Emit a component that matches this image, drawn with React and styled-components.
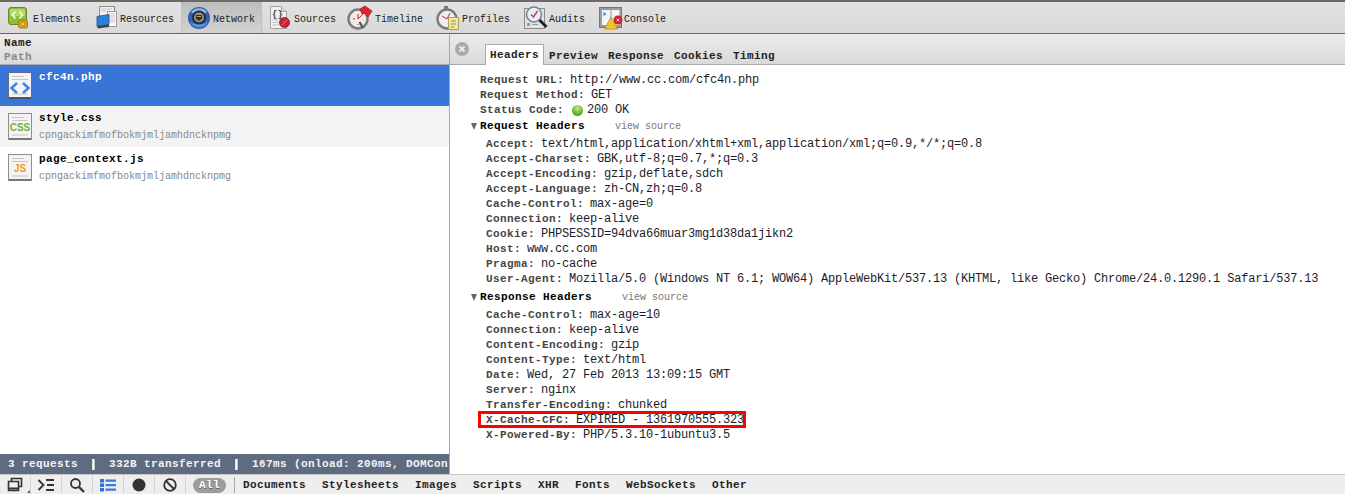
import React from 'react';
import styled, { createGlobalStyle, css } from 'styled-components';

const GlobalStyle = createGlobalStyle`
    html, body { margin: 0; padding: 0; background: #fff; }
    body { font-family: "Liberation Mono", "DejaVu Sans Mono", monospace; font-size: 10px; color: #222; }
`;

const boldText = css`
    font-family: "Liberation Mono", monospace;
    font-weight: 700;
    font-size: 11px;
    letter-spacing: 0.4px;
`;

const Page = styled.div`
    width: 1345px;
    height: 494px;
    overflow: hidden;
    display: flex;
    flex-direction: column;
`;

const Toolbar = styled.div`
    height: 31px;
    flex: none;
    display: flex;
    gap: 2px;
    padding-left: 2px;
    border-top: 2px solid #6a6a6a;
    border-bottom: 1px solid #666;
    background: linear-gradient(#e2e2e2, #d9d9d9);
`;

const ToolItem = styled.div`
    display: flex;
    align-items: center;
    padding: 0 6px;
    color: #222;
    font-size: 10px;
    ${(p) => p.$active && css`
        margin: 0 -1px;
        border-left: 1px solid #c0c0c0;
        border-right: 1px solid #c0c0c0;
        background: linear-gradient(#bdbdbd, #d2d2d2);
    `}
    svg { flex: none; width: 25px; height: 24px; overflow: visible; }
`;

const ToolLabel = styled.span`
    margin-top: 3px;
`;

const Main = styled.div`
    flex: 1;
    min-height: 0;
    display: flex;
`;

const LeftPane = styled.div`
    width: 449px;
    flex: none;
    display: flex;
    flex-direction: column;
    border-right: 1px solid #a9a9a9;
`;

const ListHeader = styled.div`
    height: 31px;
    flex: none;
    box-sizing: border-box;
    padding: 2px 0 0 4px;
    background: linear-gradient(#ececec, #d9d9d9);
    border-bottom: 1px solid #aaa;
    ${boldText}
    line-height: 14px;
`;

const HeaderSub = styled.div`
    color: #888;
`;

const FileList = styled.div`
    flex: 1;
    background: #fff;
`;

const FileRow = styled.div`
    height: 41px;
    box-sizing: border-box;
    display: flex;
    padding-left: 8px;
    background: ${(p) => (p.$selected ? '#3875d7' : p.$odd ? '#f3f3f3' : '#fff')};
    color: ${(p) => (p.$selected ? '#fff' : '#000')};
    svg { flex: none; width: 24px; height: 28px; margin-top: 7px; }
`;

const FileText = styled.div`
    margin-left: 7px;
    padding-top: 6px;
`;

const FileName = styled.div`
    ${boldText}
    line-height: 12px;
`;

const FilePath = styled.div`
    margin-top: 6px;
    line-height: 12px;
    font-size: 10px;
    color: #888;
`;

const StatusBar = styled.div`
    height: 20px;
    flex: none;
    display: flex;
    align-items: center;
    gap: 14px;
    padding-left: 8px;
    overflow: hidden;
    white-space: nowrap;
    background: #5f6b80;
    color: #f4f4f4;
    ${boldText}
`;

const StatusDivider = styled.span`
    flex: none;
    width: 3px;
    height: 11px;
    background: linear-gradient(90deg, #f5e0a0 0 33%, #fff 33% 66%, #a9c4ee 66%);
`;

const RightPane = styled.div`
    flex: 1;
    min-width: 0;
    background: #fff;
`;

const TabBar = styled.div`
    height: 31px;
    box-sizing: border-box;
    display: flex;
    align-items: flex-end;
    padding-left: 5px;
    background: linear-gradient(#ececec, #d9d9d9);
    border-bottom: 1px solid #aaa;
`;

const CloseButton = styled.div`
    align-self: flex-start;
    width: 14px;
    height: 14px;
    margin: 8px 16px 0 0;
    border-radius: 50%;
    background: #a9a9a9;
    color: #eee;
    svg { display: block; width: 14px; height: 14px; }
`;

const Tab = styled.div`
    height: 20px;
    box-sizing: border-box;
    padding: 0 5px;
    margin-bottom: -1px;
    line-height: 22px;
    color: #222;
    ${boldText}
    ${(p) => p.$active && css`
        height: 21px;
        background: #fff;
        border: 1px solid #aaa;
        border-bottom: 0;
        padding: 0 4px;
        line-height: 21px;
    `}
`;

const Details = styled.div`
    padding: 8px 0 0 30px;
    white-space: nowrap;
`;

const Row = styled.div`
    height: 15px;
    display: flex;
    align-items: center;
    line-height: 15px;
    ${(p) => p.$marked && css`
        position: relative;
        width: fit-content;
        margin-left: -8px;
        padding: 0 2px 0 8px;
        &::after {
            content: "";
            position: absolute;
            left: 0;
            right: 0;
            top: -2px;
            height: 17px;
            box-sizing: border-box;
            border: 3px solid #f00;
        }
    `}
`;

const Key = styled.span`
    ${boldText}
    color: #444;
    margin-right: 6px;
`;

const Value = styled.span`
    font-family: "Liberation Mono", monospace;
    font-size: 12px;
    letter-spacing: -0.2px;
    color: #1c1c2c;
`;

const StatusDot = styled.span`
    width: 11px;
    height: 11px;
    margin: 0 4px 0 2px;
    border-radius: 50%;
    background: radial-gradient(circle at 50% 30%, #c5ec8c, #5fb32a 60%, #3c8a17);
`;

const SectionHead = styled.div`
    height: 15px;
    margin: 1px 0 3px -9px;
    display: flex;
    align-items: center;
    line-height: 15px;
    color: #000;
    ${boldText}
`;

const Arrow = styled.span`
    width: 0;
    height: 0;
    margin-right: 3px;
    border-left: 3.5px solid transparent;
    border-right: 3.5px solid transparent;
    border-top: 7px solid #666;
`;

const ViewSource = styled.span`
    margin-left: 30px;
    font-family: "Liberation Mono", monospace;
    font-weight: 400;
    font-size: 10px;
    letter-spacing: 0;
    color: #777;
`;

const SectionBody = styled.div`
    padding-left: 6px;
    margin-bottom: 3px;
`;

const BottomBar = styled.div`
    height: 20px;
    flex: none;
    box-sizing: border-box;
    display: flex;
    align-items: center;
    border-top: 1px solid #c8c8c8;
    background: #eee;
`;

const IconButton = styled.div`
    width: 31px;
    height: 19px;
    box-sizing: border-box;
    flex: none;
    display: flex;
    align-items: center;
    justify-content: center;
    border-right: 1px solid #d4d4d4;
    svg { width: 18px; height: 18px; overflow: visible; }
`;

const AllPill = styled.div`
    width: 33px;
    height: 15px;
    margin: 1px 0 0 7px;
    flex: none;
    border-radius: 8px;
    background: #9c9c9c;
    color: #fff;
    text-align: center;
    line-height: 15px;
    ${boldText}
    text-shadow: 0 1px 0 #666;
`;

const FilterDivider = styled.div`
    width: 1px;
    height: 16px;
    margin: 0 8px 0 8px;
    flex: none;
    background: #aaa;
`;

const Filters = styled.div`
    display: flex;
    gap: 16px;
    color: #222;
    ${boldText}
`;

const IconGlyph = styled.text`
    font-family: "Liberation Mono", monospace;
    font-weight: 700;
    font-size: 9px;
    fill: #444;
`;

const ElementsIcon = () => (
    <svg viewBox="0 0 25 24">
        <rect x="0.5" y="1.5" width="18" height="17" rx="2.5" fill="#8fbf3a" stroke="#5f8a28" />
        <rect x="2" y="3" width="15" height="7" rx="1.5" fill="#b4d968" />
        <path d="M7.5 5.5 4.5 9l3 3.5M11.5 5.5l3 3.5-3 3.5" fill="none" stroke="#f4f8e8" strokeWidth="1.7" />
        <rect x="10.5" y="14" width="9" height="8" rx="2" fill="#d9a916" stroke="#a37a0c" />
        <circle cx="15" cy="18" r="2" fill="#f3d65a" stroke="#a37a0c" strokeWidth="0.8" />
    </svg>
);

const ResourcesIcon = () => (
    <svg viewBox="0 0 25 24">
        <rect x="4.5" y="0.5" width="15" height="19" fill="#f1f1f1" stroke="#8a8a8a" />
        <rect x="12.5" y="5.5" width="9" height="15" fill="#fafafa" stroke="#9a9a9a" />
        <path d="M6 3h11M6 5h5M14 8h6M14 10h6M14 12h6M14 14h6M14 16h6" stroke="#bdbdbd" strokeWidth="0.8" />
        <path d="M2 10.5l12-2v10l-12 2z" fill="#2e7fe0" stroke="#19528f" strokeWidth="0.8" />
        <path d="M2 20l12-1.5v2.5L3 22.5z" fill="#444" />
    </svg>
);

const NetworkIcon = () => (
    <svg viewBox="0 0 25 24">
        <circle cx="11" cy="12" r="11" fill="#2f60b0" />
        <path d="M3 6a10.500 10.500 0 0 1 16 0l-3 2H6z" fill="#9fb4d4" />
        <path d="M2 15a9.500 9.500 0 0 0 18 0l-3 2.500H5z" fill="#5a92d8" />
        <circle cx="11" cy="11.500" r="7" fill="#1e2c4e" />
        <circle cx="11" cy="11.500" r="5" fill="#9a9184" />
        <path d="M8 9h6v4h-1.500v1.500h-3V13H8z" fill="#2c2a26" />
        <path d="M9 10h4v1H9z" fill="#c7a24a" />
    </svg>
);

const SourcesIcon = () => (
    <svg viewBox="0 0 25 24">
        <path d="M1.500 0.500h11l5 5v17h-16z" fill="#f2f2f2" stroke="#a3a3a3" />
        <path d="M12.500 0.500v5h5" fill="#ddd" stroke="#a3a3a3" />
        <IconGlyph x="3" y="11">{'{}'}</IconGlyph>
        <path d="M3.500 14h6M3.500 16.500h6M3.500 19h7" stroke="#bbb" strokeWidth="0.9" />
        <circle cx="15.500" cy="16.500" r="5" fill="#d2232a" stroke="#8e1116" strokeWidth="0.8" />
        <path d="M13 19l5-5" stroke="#f0787a" strokeWidth="1" />
    </svg>
);

const TimelineIcon = () => (
    <svg viewBox="0 0 25 24">
        <circle cx="8" cy="13" r="9.500" fill="#f0ecec" stroke="#7c7c7c" strokeWidth="2.500" />
        <path d="M8 13l5-5M8 13V8M3 13h2M8 18v1" stroke="#c2272d" strokeWidth="1" />
        <path d="M13 22l-3.500-6" stroke="#555" strokeWidth="2.200" />
        <path d="M10 3l5-3 7 5-4 6-3-4-3 1z" fill="#e0252a" stroke="#a31318" strokeWidth="0.7" />
    </svg>
);

const ProfilesIcon = () => (
    <svg viewBox="0 0 25 24">
        <rect x="7" y="0" width="4" height="3" fill="#777" />
        <circle cx="10" cy="13" r="9.500" fill="#efefef" stroke="#7a7a7a" strokeWidth="2.400" />
        <path d="M10 13l3-6M5 10l5 3" stroke="#c2272d" strokeWidth="1" />
        <rect x="11.500" y="11.500" width="10" height="12" fill="#f0e6a2" stroke="#b0a25c" />
        <path d="M14 15h5M14 18h5M14 21h3" stroke="#8c9a58" strokeWidth="1" />
    </svg>
);

const AuditsIcon = () => (
    <svg viewBox="0 0 25 24">
        <rect x="0.500" y="2.500" width="20" height="20" fill="#e2e2e2" stroke="#8a8a8a" />
        <rect x="3" y="17" width="3" height="3" fill="#9a9a9a" />
        <path d="M8 18.500h6" stroke="#9a9a9a" />
        <circle cx="10" cy="8.500" r="7.500" fill="#e4f0f6" stroke="#6f8795" strokeWidth="1.500" />
        <path d="M7 8.500l2.500 2.500 4-6" fill="none" stroke="#d5343a" strokeWidth="1.400" />
        <path d="M15.500 14l7 7" stroke="#222" strokeWidth="3" />
    </svg>
);

const ConsoleIcon = () => (
    <svg viewBox="0 0 25 24">
        <rect x="0.500" y="1.500" width="22" height="20" fill="#9b9b9b" stroke="#777" />
        <rect x="3" y="4" width="8.500" height="15" fill="#f1f5fa" />
        <rect x="12.500" y="4" width="8" height="15" fill="#f4f4f4" />
        <path d="M4.500 6l3 2-3 2z" fill="#3a7cd5" />
        <path d="M12 11l6.500 12H5.500z" fill="#f3c52a" stroke="#b08a12" strokeWidth="0.7" />
        <circle cx="19" cy="14" r="4.500" fill="#c9252c" />
        <path d="M17.500 12.500l3 3m0-3l-3 3" stroke="#fff" strokeWidth="0.8" />
    </svg>
);

// page icon for the request list, the centre part differs per type
const FileIcon = ({ children, selected }) => (
    <svg viewBox="0 0 24 28">
        <rect x="0.500" y="0.500" width="23" height="26" fill="#f4f4f4" stroke={selected ? '#5b6f8c' : '#8e8e8e'} />
        <rect x="1" y="25" width="22" height="2" fill={selected ? '#45566e' : '#777'} />
        <path d="M4 4.500h12M4 7.500h16M4 22h16" stroke="#c6c6c6" strokeWidth="1" />
        {children}
    </svg>
);

const FileType = styled.text`
    font-family: "Liberation Sans", sans-serif;
    font-weight: 700;
    font-size: 10px;
    fill: ${(p) => p.$color};
`;

const tools = [
    { label: 'Elements', Icon: ElementsIcon },
    { label: 'Resources', Icon: ResourcesIcon },
    { label: 'Network', Icon: NetworkIcon, active: true },
    { label: 'Sources', Icon: SourcesIcon },
    { label: 'Timeline', Icon: TimelineIcon },
    { label: 'Profiles', Icon: ProfilesIcon },
    { label: 'Audits', Icon: AuditsIcon },
    { label: 'Console', Icon: ConsoleIcon },
];

const general = [
    ['Request URL:', 'http://www.cc.com/cfc4n.php'],
    ['Request Method:', 'GET'],
];

const requestHeaders = [
    ['Accept:', 'text/html,application/xhtml+xml,application/xml;q=0.9,*/*;q=0.8'],
    ['Accept-Charset:', 'GBK,utf-8;q=0.7,*;q=0.3'],
    ['Accept-Encoding:', 'gzip,deflate,sdch'],
    ['Accept-Language:', 'zh-CN,zh;q=0.8'],
    ['Cache-Control:', 'max-age=0'],
    ['Connection:', 'keep-alive'],
    ['Cookie:', 'PHPSESSID=94dva66muar3mg1d38da1jikn2'],
    ['Host:', 'www.cc.com'],
    ['Pragma:', 'no-cache'],
    ['User-Agent:', 'Mozilla/5.0 (Windows NT 6.1; WOW64) AppleWebKit/537.13 (KHTML, like Gecko) Chrome/24.0.1290.1 Safari/537.13'],
];

const responseHeaders = [
    ['Cache-Control:', 'max-age=10'],
    ['Connection:', 'keep-alive'],
    ['Content-Encoding:', 'gzip'],
    ['Content-Type:', 'text/html'],
    ['Date:', 'Wed, 27 Feb 2013 13:09:15 GMT'],
    ['Server:', 'nginx'],
    ['Transfer-Encoding:', 'chunked'],
    ['X-Cache-CFC:', 'EXPIRED - 1361970555.323', true],
    ['X-Powered-By:', 'PHP/5.3.10-1ubuntu3.5'],
];

const filters = ['Documents', 'Stylesheets', 'Images', 'Scripts', 'XHR', 'Fonts', 'WebSockets', 'Other'];
const tabs = ['Headers', 'Preview', 'Response', 'Cookies', 'Timing'];

const HeaderRows = ({ rows }) => rows.map(([name, value, marked]) => (
    <Row key={name} $marked={marked}>
        <Key>{name}</Key>
        <Value>{value}</Value>
    </Row>
));

const App = () => {
    return (
        <Page>
            <GlobalStyle />
            <Toolbar>
                {tools.map(({ label, Icon, active }) => (
                    <ToolItem key={label} $active={active}>
                        <Icon />
                        <ToolLabel>{label}</ToolLabel>
                    </ToolItem>
                ))}
            </Toolbar>
            <Main>
                <LeftPane>
                    <ListHeader>
                        Name
                        <HeaderSub>Path</HeaderSub>
                    </ListHeader>
                    <FileList>
                        <FileRow $selected>
                            <FileIcon selected>
                                <path d="M9 11 3.500 16 9 21M15 11l5.500 5-5.500 5" fill="none" stroke="#3f86e6" strokeWidth="2.600" />
                            </FileIcon>
                            <FileText>
                                <FileName>cfc4n.php</FileName>
                            </FileText>
                        </FileRow>
                        <FileRow $odd>
                            <FileIcon>
                                <FileType x="12" y="18" textAnchor="middle" $color="#6db33f">CSS</FileType>
                            </FileIcon>
                            <FileText>
                                <FileName>style.css</FileName>
                                <FilePath>cpngackimfmofbokmjmljamhdncknpmg</FilePath>
                            </FileText>
                        </FileRow>
                        <FileRow>
                            <FileIcon>
                                <FileType x="12" y="18" textAnchor="middle" $color="#f39c1f">JS</FileType>
                            </FileIcon>
                            <FileText>
                                <FileName>page_context.js</FileName>
                                <FilePath>cpngackimfmofbokmjmljamhdncknpmg</FilePath>
                            </FileText>
                        </FileRow>
                    </FileList>
                    <StatusBar>
                        <span>3 requests</span>
                        <StatusDivider />
                        <span>332B transferred</span>
                        <StatusDivider />
                        <span>167ms (onload: 200ms, DOMContentLoaded: 180ms)</span>
                    </StatusBar>
                </LeftPane>
                <RightPane>
                    <TabBar>
                        <CloseButton>
                            <svg viewBox="0 0 14 14">
                                <path d="M4.500 4.500l5 5m0-5l-5 5" stroke="currentColor" strokeWidth="1.800" />
                            </svg>
                        </CloseButton>
                        {tabs.map((tab, index) => (
                            <Tab key={tab} $active={index === 0}>{tab}</Tab>
                        ))}
                    </TabBar>
                    <Details>
                        <HeaderRows rows={general} />
                        <Row>
                            <Key>Status Code:</Key>
                            <StatusDot />
                            <Value>200 OK</Value>
                        </Row>
                        <SectionHead>
                            <Arrow />
                            Request Headers
                            <ViewSource>view source</ViewSource>
                        </SectionHead>
                        <SectionBody>
                            <HeaderRows rows={requestHeaders} />
                        </SectionBody>
                        <SectionHead>
                            <Arrow />
                            Response Headers
                            <ViewSource>view source</ViewSource>
                        </SectionHead>
                        <SectionBody>
                            <HeaderRows rows={responseHeaders} />
                        </SectionBody>
                    </Details>
                </RightPane>
            </Main>
            <BottomBar>
                <IconButton>
                    <svg viewBox="0 0 18 18">
                        <path d="M5.500 2.500h10v8h-10z" fill="none" stroke="#333" strokeWidth="1.600" />
                        <path d="M2.500 5.500h10v9h-10z" fill="#eee" stroke="#333" strokeWidth="1.600" />
                        <path d="M2.500 12.500h10" stroke="#333" strokeWidth="2" />
                        <path d="M21 17l3-3v3z" fill="#555" />
                    </svg>
                </IconButton>
                <IconButton>
                    <svg viewBox="0 0 18 18">
                        <path d="M1.500 4l5 5-5 5" fill="none" stroke="#333" strokeWidth="1.800" />
                        <path d="M9 4h8M10 9h7M9 14h8" stroke="#333" strokeWidth="1.800" />
                    </svg>
                </IconButton>
                <IconButton>
                    <svg viewBox="0 0 18 18">
                        <circle cx="7.500" cy="7.500" r="4.500" fill="none" stroke="#333" strokeWidth="1.800" />
                        <path d="M11 11l5 5" stroke="#333" strokeWidth="2.400" />
                    </svg>
                </IconButton>
                <IconButton>
                    <svg viewBox="0 0 18 18">
                        <path d="M1 3h4v3.500H1zM1 7.500h4V11H1zM1 12h4v3.500H1z" fill="#2f6fd6" />
                        <path d="M6.500 4.700h10.500M6.500 9.200h10.500M6.500 13.700h10.500" stroke="#3b7bdc" strokeWidth="2.200" />
                    </svg>
                </IconButton>
                <IconButton>
                    <svg viewBox="0 0 18 18">
                        <circle cx="9" cy="9" r="6.500" fill="#333" />
                    </svg>
                </IconButton>
                <IconButton>
                    <svg viewBox="0 0 18 18">
                        <circle cx="9" cy="9" r="5.800" fill="none" stroke="#333" strokeWidth="1.800" />
                        <path d="M5 5l8 8" stroke="#333" strokeWidth="1.800" />
                    </svg>
                </IconButton>
                <AllPill>All</AllPill>
                <FilterDivider />
                <Filters>
                    {filters.map((filter) => (
                        <span key={filter}>{filter}</span>
                    ))}
                </Filters>
            </BottomBar>
        </Page>
    );
};

export default App;
